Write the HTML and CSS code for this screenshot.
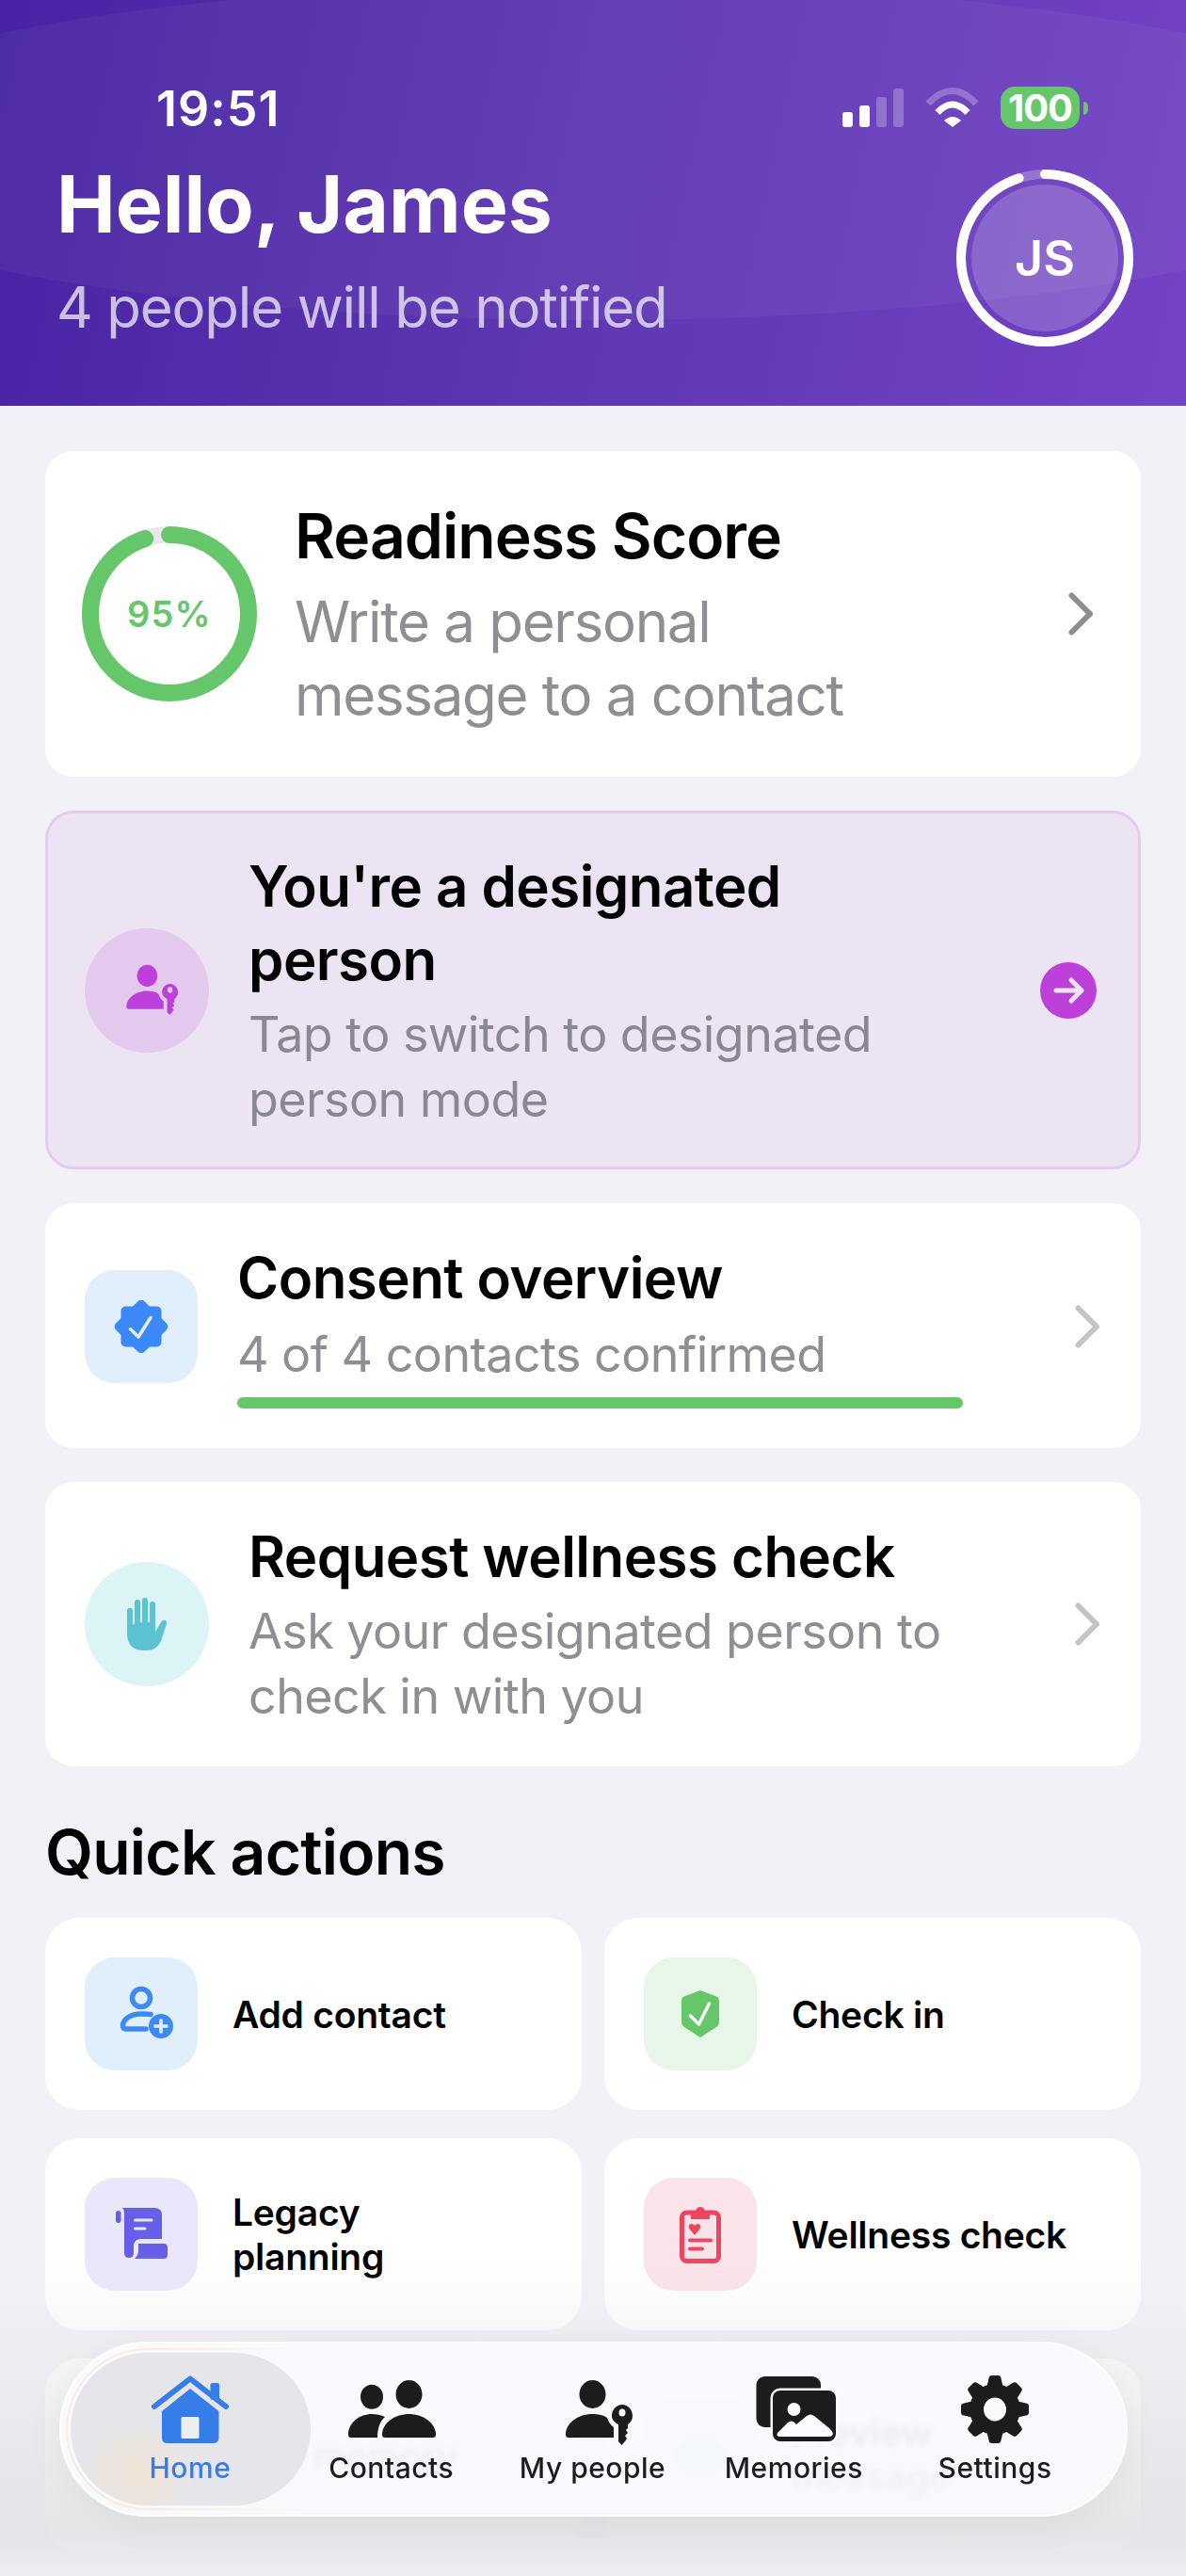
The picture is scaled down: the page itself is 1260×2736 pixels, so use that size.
FILE: index.html
```html
<!DOCTYPE html>
<html lang="en">
<head>
<meta charset="utf-8">
<title>Home</title>
<link rel="stylesheet" href="styles.css">
</head>
<body>
<svg class="defs" width="0" height="0" aria-hidden="true">
  <symbol id="person-key" viewBox="0 0 96 74">
    <ellipse cx="48.5" cy="20" rx="14" ry="15"/>
    <path d="M20 63C20 50 34 41 48 41C55 41 60 42 64 45C66 50 68 53 71 55V66H23Q20 66 20 63Z"/>
    <path fill-rule="evenodd" d="M80 31C86 31 91 36 91 43C91 47 89 50 86 52V56L84 58L86 61L83 64L85 67L83 70L79.500 74L76 70V52C72 50 69 47 69 43C69 36 74 31 80 31ZM80 35.500A3.500 4 0 1 0 80 43.500A3.500 4 0 1 0 80 35.500Z"/>
  </symbol>
  <symbol id="chev" viewBox="0 0 26 46">
    <path d="M3.500 3.500L23 23L3.500 42.500" fill="none" stroke="currentColor" stroke-width="6" stroke-linecap="round" stroke-linejoin="round"/>
  </symbol>
</svg>

<div class="phone">
  <header class="hero">
    <div class="hero-glow"></div>
    <div class="status">
      <span class="time">19:51</span>
      <div class="status-icons">
        <div class="signal"><i class="bar b1"></i><i class="bar b2"></i><i class="bar b3 dim"></i><i class="bar b4 dim"></i></div>
        <svg class="wifi" viewBox="0 0 57 42">
          <path class="wifi-dim" d="M3 17Q28.500 -10 54 17"/>
          <path class="wifi-on" d="M13 26.500Q29 9.500 45 26.500"/>
          <path class="wifi-fill" d="M29 42L20 35Q29 27 38 35Z"/>
        </svg>
        <div class="battery"><span class="battery-body">100</span><i class="battery-nub"></i></div>
      </div>
    </div>
    <div class="greeting">
      <div class="greeting-text">
        <h1>Hello, James</h1>
        <p>4 people will be notified</p>
      </div>
      <div class="avatar">
        <svg class="avatar-ring" viewBox="0 0 188 188">
          <circle class="ar-track" cx="94" cy="94" r="89"/>
          <circle class="ar-value" cx="94" cy="94" r="89" pathLength="100" stroke-dasharray="95 100" transform="rotate(-90 94 94)"/>
        </svg>
        <span class="avatar-initials">JS</span>
      </div>
    </div>
  </header>

  <main class="content">
    <section class="card card-score">
      <div class="score">
        <svg class="score-ring" viewBox="0 0 186 186">
          <circle class="sr-track" cx="93" cy="93" r="84"/>
          <circle class="sr-value" cx="93" cy="93" r="84" pathLength="100" stroke-dasharray="95 100" transform="rotate(-90 93 93)"/>
        </svg>
        <span class="score-label">95%</span>
      </div>
      <div class="score-text">
        <h2 class="t-big">Readiness Score</h2>
        <p class="s-big">Write a personal message to a contact</p>
      </div>
      <svg class="chev chev-dark"><use href="#chev"/></svg>
    </section>

    <section class="card card-designated">
      <div class="round round-purple">
        <svg class="person-key-sm"><use href="#person-key"/></svg>
      </div>
      <div class="round-text">
        <h2 class="t-mid">You're a designated person</h2>
        <p class="s-mid s-purple">Tap to switch to designated person mode</p>
      </div>
      <div class="go">
        <svg viewBox="0 0 60 60"><path d="M17 30H44M33 19L44 30L33 41"/></svg>
      </div>
    </section>

    <section class="card card-consent">
      <div class="icon-tile tile-blue">
        <svg class="badge" viewBox="0 0 60 60">
          <rect x="8.500" y="8.500" width="43" height="43" rx="5"/>
          <rect x="8.500" y="8.500" width="43" height="43" rx="5" transform="rotate(45 30 30)"/>
          <path d="M18.500 32.500L27 41L40 20.500"/>
        </svg>
      </div>
      <div class="consent-text">
        <h2 class="t-mid t-tight">Consent overview</h2>
        <p class="s-consent">4 of 4 contacts confirmed</p>
        <div class="progress"></div>
      </div>
      <svg class="chev chev-light"><use href="#chev"/></svg>
    </section>

    <section class="card card-wellness">
      <div class="round round-teal">
        <svg class="hand" viewBox="0 0 43 56"><path d="M0 14Q0 10.700 3 10.700Q6 10.700 6 14V28H8V5Q8 2 11 2Q14 2 14 5V26H16V3Q16 0 19 0Q22 0 22 3V26H24V7Q24 4 27 4Q30 4 30 7V36L36 26Q38 23 41 24Q42.500 25 42 28L36 46Q32 56 19 56Q0 56 0 38Z"/></svg>
      </div>
      <div class="round-text round-text-wide">
        <h2 class="t-mid">Request wellness check</h2>
        <p class="s-mid">Ask your designated person to check in with you</p>
      </div>
      <svg class="chev chev-light"><use href="#chev"/></svg>
    </section>

    <h2 class="section-title">Quick actions</h2>

    <div class="quick-grid">
      <div class="quick">
        <div class="icon-tile tile-blue">
          <svg class="qi-add" viewBox="0 0 100 100">
            <circle cx="50" cy="33" r="9.500"/>
            <path d="M60 50.500C57 50 54 50 50 50C38 50 31 56 30.500 62C30.500 65 32 66 34 66H55"/>
            <circle class="plus-bg" cx="71" cy="63" r="13"/>
            <path class="plus" d="M71 55.500V70.500M63.500 63H78.500"/>
          </svg>
        </div>
        <span class="quick-label">Add contact</span>
      </div>
      <div class="quick">
        <div class="icon-tile tile-green">
          <svg class="qi-shield" viewBox="0 0 42 50">
            <path class="shield" d="M21 0L37 6Q41 7 41 11V33Q41 37 38 39L21 50L4 39Q1 37 1 33V11Q1 7 5 6Z"/>
            <path class="shield-check" d="M10.500 27L19.500 36L30.500 14"/>
          </svg>
        </div>
        <span class="quick-label">Check in</span>
      </div>
      <div class="quick">
        <div class="icon-tile tile-indigo">
          <svg class="qi-scroll" viewBox="0 0 100 100">
            <rect x="23" y="25" width="5.500" height="13" rx="2.700"/>
            <path d="M30 22H64Q72 22 72 30V55H50Q42 55 42 63V70Q42 75 37 75Q32 75 32 70V28Q32 24 30 22Z"/>
            <path d="M47 60H74Q78 60 78 64V72Q78 76 74 76H43Q47 72 47 68Z"/>
            <path class="scroll-line" d="M43.500 35H61M43.500 44H54"/>
          </svg>
        </div>
        <span class="quick-label">Legacy<br>planning</span>
      </div>
      <div class="quick">
        <div class="icon-tile tile-rose">
          <svg class="qi-clip" viewBox="0 0 44 62">
            <rect class="clip-frame" x="2.500" y="8" width="39" height="51.500" rx="5"/>
            <path class="clip-top" d="M12 15V9Q12 7 14 7H17A5 5 0 0 1 27 7H30Q32 7 32 9V15Z"/>
            <path class="clip-heart" d="M16 32L10.500 25.500C9 23 10 20 12.500 20C14 20 15.500 21 16 22C16.500 21 18 20 19.500 20C22 20 23 23 21.500 25.500Z"/>
            <path class="clip-line" d="M11 37.500H33M11 46.500H24"/>
          </svg>
        </div>
        <span class="quick-label">Wellness check</span>
      </div>
      <div class="quick">
        <div class="icon-tile tile-orange"></div>
        <span class="quick-label">Add memory</span>
      </div>
      <div class="quick">
        <div class="icon-tile tile-teal">
          <svg class="qi-eye" viewBox="0 0 70 44">
            <path d="M0 22Q35 -22 70 22Q35 66 0 22Z"/>
          </svg>
        </div>
        <span class="quick-label">Preview<br>message</span>
      </div>
    </div>
  </main>

  <div class="fade"></div>

  <nav class="tabbar">
    <a class="tab tab-active">
      <svg class="tab-icon" viewBox="0 0 96 74">
        <path class="home-roof" d="M10 33L48 3.500L86 33"/>
        <rect x="69.500" y="8" width="9.500" height="18" rx="2"/>
        <path d="M48 14L78.500 38V66Q78.500 72 72 72H24Q18 72 18 66V38Z"/>
        <rect class="home-door" x="38.500" y="44" width="19" height="23" rx="1.500"/>
      </svg>
      <span class="tab-label">Home</span>
    </a>
    <a class="tab">
      <svg class="tab-icon" viewBox="0 0 96 74">
        <ellipse cx="27" cy="22.700" rx="12" ry="13"/>
        <ellipse cx="66.500" cy="20" rx="14" ry="15"/>
        <path d="M2 63C2 50 14 41 27 41C32 41 37 42 41 44C36 48 33 56 33 66H5Q2 66 2 63Z"/>
        <path d="M38 63C38 50 52 41 66.500 41C81 41 95 50 95 63Q95 66 92 66H41Q38 66 38 63Z"/>
      </svg>
      <span class="tab-label">Contacts</span>
    </a>
    <a class="tab">
      <svg class="tab-icon"><use href="#person-key"/></svg>
      <span class="tab-label">My people</span>
    </a>
    <a class="tab">
      <svg class="tab-icon" viewBox="0 0 96 74">
        <rect x="8.500" y="1" width="68.500" height="54" rx="9"/>
        <rect class="photo-front" x="26" y="16" width="67" height="54" rx="8"/>
        <circle class="photo-cut" cx="48.500" cy="36" r="7"/>
        <path class="photo-cut" d="M34 65Q29 65 31 61L42 50Q46 47 49 50L51 52L62 43Q66 40 70 43L86 56Q90 60 90 62Q89 65 86 65Z"/>
      </svg>
      <span class="tab-label">Memories</span>
    </a>
    <a class="tab">
      <svg class="tab-icon" viewBox="0 0 96 74">
        <g id="gear-teeth">
          <path id="tooth" d="M41.500 3Q42 0 44.500 0H51.500Q54 0 54.500 3L57 14H39Z"/>
          <use href="#tooth" transform="rotate(45 48 36)"/>
          <use href="#tooth" transform="rotate(90 48 36)"/>
          <use href="#tooth" transform="rotate(135 48 36)"/>
          <use href="#tooth" transform="rotate(180 48 36)"/>
          <use href="#tooth" transform="rotate(225 48 36)"/>
          <use href="#tooth" transform="rotate(270 48 36)"/>
          <use href="#tooth" transform="rotate(315 48 36)"/>
        </g>
        <path fill-rule="evenodd" d="M48 9A27 27 0 1 1 48 63A27 27 0 1 1 48 9ZM48 23.500A12 12.500 0 1 0 48 48.500A12 12.500 0 1 0 48 23.500Z"/>
      </svg>
      <span class="tab-label">Settings</span>
    </a>
  </nav>
</div>
</body>
</html>
```

FILE: styles.css
```css
* { box-sizing: border-box; }

html, body {
  margin: 0;
  padding: 0;
}

body {
  font-family: Inter, "Liberation Sans", sans-serif;
  background: #f2f1f7;
  color: #000;
}

h1, h2, p { margin: 0; }

.defs { position: absolute; }

.phone {
  position: relative;
  width: 1260px;
  height: 2736px;
  overflow: hidden;
  background: #f2f1f7;
}

/* Header */
.hero {
  position: relative;
  height: 431px;
  overflow: hidden;
  color: #fff;
  background: linear-gradient(102deg, #4722a3 0%, #5c35b0 45%, #7343c6 100%);
}

.hero-glow {
  position: absolute;
  left: -256px;
  top: -18px;
  width: 1772px;
  height: 358px;
  border-radius: 50%;
  background: rgba(255, 255, 255, 0.045);
}

.status {
  position: relative;
  display: flex;
  justify-content: space-between;
  align-items: flex-start;
  height: 146px;
  padding: 86px 104px 0 166px;
}

.time {
  font-size: 52px;
  line-height: 60px;
  font-weight: 600;
  letter-spacing: 1px;
}

.status-icons {
  display: flex;
  align-items: flex-start;
  margin-top: 6px;
}

.signal {
  display: flex;
  align-items: flex-end;
  gap: 7px;
  width: 65px;
  height: 43px;
}

.bar {
  width: 11px;
  border-radius: 3px;
  background: #fff;
}
.b1 { height: 16px; }
.b2 { height: 23px; }
.b3 { height: 32px; }
.b4 { height: 41px; }
.dim { background: rgba(255, 255, 255, 0.25); }

.wifi {
  width: 57px;
  height: 42px;
  margin: 1px 23px 0 23px;
  fill: none;
  stroke-width: 7;
}
.wifi-dim { stroke: rgba(255, 255, 255, 0.25); }
.wifi-on { stroke: #fff; }
.wifi-fill { fill: #fff; }

.battery {
  display: flex;
  align-items: center;
  gap: 4px;
}

.battery-body {
  width: 84px;
  height: 45px;
  border-radius: 15px;
  background: #66c66a;
  font-size: 40px;
  line-height: 45px;
  font-weight: 700;
  letter-spacing: -1px;
  text-align: center;
}

.battery-nub {
  width: 5px;
  height: 14px;
  border-radius: 0 5px 5px 0;
  background: #66c66a;
}

.greeting {
  position: relative;
  display: flex;
  justify-content: space-between;
  align-items: flex-start;
  padding: 21px 56px 0 60px;
}

.greeting h1 {
  font-size: 84px;
  line-height: 100px;
  font-weight: 700;
  letter-spacing: 0;
}

.greeting p {
  margin-top: 23px;
  font-size: 60px;
  line-height: 72px;
  font-weight: 400;
  color: rgba(255, 255, 255, 0.7);
  letter-spacing: -1.2px;
}

.avatar {
  display: grid;
  place-items: center;
  width: 188px;
  height: 188px;
  margin-top: 13px;
}
.avatar > * { grid-area: 1 / 1; }

.avatar-ring { width: 188px; height: 188px; }
.ar-track { fill: none; stroke: rgba(255, 255, 255, 0.25); stroke-width: 10; }
.ar-value { fill: none; stroke: #fff; stroke-width: 10; stroke-linecap: round; }

.avatar-initials {
  display: flex;
  align-items: center;
  justify-content: center;
  width: 156px;
  height: 156px;
  border-radius: 50%;
  background: rgba(255, 255, 255, 0.18);
  font-size: 52px;
  font-weight: 600;
}

/* Content */
.content {
  padding: 48px 48px 0;
}

.card {
  display: flex;
  align-items: center;
  margin-bottom: 36px;
  border-radius: 30px;
  background: #fff;
}

.card-score { padding: 51px 51px 48px 39px; }

.score {
  display: grid;
  place-items: center;
  flex: none;
  width: 186px;
  height: 186px;
  margin: 0 40px 3px 0;
}
.score > * { grid-area: 1 / 1; }
.score-ring { width: 186px; height: 186px; }
.sr-track { fill: none; stroke: #e8e8ea; stroke-width: 18; }
.sr-value { fill: none; stroke: #66c66a; stroke-width: 18; stroke-linecap: round; }

.score-label {
  font-size: 38px;
  font-weight: 600;
  color: #66c66a;
  letter-spacing: 1.2px;
}

.score-text { max-width: 640px; }

.t-big {
  font-size: 66px;
  line-height: 78px;
  font-weight: 600;
  letter-spacing: -1px;
}

.s-big {
  margin-top: 13px;
  font-size: 60px;
  line-height: 78px;
  font-weight: 400;
  color: #8e8e93;
  letter-spacing: -1.3px;
}

.chev {
  flex: none;
  width: 26px;
  height: 46px;
  margin-left: auto;
}
.chev-dark { color: #8e8e93; margin-bottom: 3px; }
.chev-light { color: #c4c4c7; }

.card-designated {
  padding: 38px 44px 37px 39px;
  border: 3px solid #e3cdef;
  background: #ede4f3;
}

.round {
  display: flex;
  align-items: center;
  justify-content: center;
  flex: none;
  width: 132px;
  height: 132px;
  margin-right: 42px;
  border-radius: 50%;
}
.round-purple { background: #e3c9ee; }
.round-teal { background: #dcf4f6; }

.person-key-sm {
  width: 74px;
  height: 57px;
  margin-bottom: 5px;
  fill: #bc40d9;
}

.round-text { max-width: 720px; }
.round-text-wide { max-width: 770px; }

.t-mid {
  font-size: 60px;
  line-height: 78px;
  font-weight: 600;
  letter-spacing: -0.55px;
}

.s-mid {
  margin-top: 6px;
  font-size: 52px;
  line-height: 69px;
  font-weight: 400;
  color: #8e8e93;
  letter-spacing: -0.55px;
}
.s-purple { color: #8a8792; }

.go {
  flex: none;
  width: 60px;
  height: 60px;
  margin-left: auto;
  border-radius: 50%;
  background: #bc40d9;
}
.go svg {
  display: block;
  width: 60px;
  height: 60px;
  fill: none;
  stroke: #f3e3f7;
  stroke-width: 5;
  stroke-linecap: round;
  stroke-linejoin: round;
}

.card-consent { padding: 43px 44px 42px 42px; }

.icon-tile {
  display: flex;
  align-items: center;
  justify-content: center;
  flex: none;
  width: 120px;
  height: 120px;
  border-radius: 32px;
}
.tile-blue { background: #e1effd; }
.tile-green { background: #e8f6ea; }
.tile-indigo { background: #e9e7fb; }
.tile-rose { background: #fae3e9; }
.tile-orange { background: #fdeedd; }
.tile-teal { background: #dcf7f9; }

.badge { width: 60px; height: 60px; fill: #3b88f8; }
.badge path {
  fill: none;
  stroke: #e6f0fd;
  stroke-width: 3.5;
  stroke-linecap: round;
  stroke-linejoin: round;
}

.consent-text {
  width: 771px;
  margin-left: 42px;
}

.t-tight { line-height: 72px; }

.s-consent {
  margin-top: 13px;
  font-size: 52px;
  line-height: 66px;
  font-weight: 400;
  color: #8e8e93;
  letter-spacing: -0.55px;
}

.progress {
  height: 12px;
  margin-top: 12px;
  border-radius: 6px;
  background: #66c66a;
}

.card-wellness { padding: 40px 44px 40px 42px; }

.hand { width: 43px; height: 56px; fill: #5bc3d1; }

.section-title {
  margin: 51px 0 30px;
  font-size: 66px;
  line-height: 80px;
  font-weight: 600;
  letter-spacing: -0.8px;
}

.quick-grid {
  display: grid;
  grid-template-columns: 570px 570px;
  grid-auto-rows: 204px;
  column-gap: 24px;
  row-gap: 30px;
}

.quick {
  display: flex;
  align-items: center;
  padding-left: 42px;
  border-radius: 36px;
  background: #fff;
}

.quick-label {
  margin-left: 37px;
  font-size: 39px;
  line-height: 47px;
  font-weight: 600;
  letter-spacing: -0.25px;
}

.qi-add { width: 100px; height: 100px; fill: none; stroke: #3d8af7; stroke-width: 5.5; stroke-linecap: round; }
.plus-bg { fill: #3d8af7; stroke: none; }
.plus { stroke: #e1effd; stroke-width: 3.5; stroke-linecap: butt; }

.qi-shield { width: 42px; height: 50px; }
.shield { fill: #66c66a; }
.shield-check { fill: none; stroke: #fff; stroke-width: 3.5; stroke-linecap: round; stroke-linejoin: round; }

.qi-scroll { width: 100px; height: 100px; fill: #675fe8; }
.scroll-line { fill: none; stroke: #e9e7fb; stroke-width: 3; stroke-linecap: round; }

.qi-clip { width: 44px; height: 62px; }
.clip-frame { fill: none; stroke: #ec4560; stroke-width: 5; }
.clip-top { fill: #ec4560; }
.clip-heart { fill: #ec4560; }
.clip-line { fill: none; stroke: #ec4560; stroke-width: 4; stroke-linecap: round; }

.qi-eye { width: 70px; height: 44px; fill: #7fe9ef; }

/* Bottom fade under the floating tab bar */
.fade {
  position: absolute;
  left: 0;
  right: 0;
  bottom: 0;
  height: 340px;
  background: linear-gradient(180deg,
    rgba(228, 228, 232, 0) 0%,
    rgba(228, 228, 232, 0.28) 24%,
    rgba(226, 226, 230, 0.88) 86%,
    rgba(238, 238, 242, 0.96) 100%);
}

.tabbar {
  position: absolute;
  left: 63px;
  right: 62px;
  bottom: 63px;
  display: flex;
  height: 186px;
  padding: 36px 34px 0 32px;
  border-radius: 93px;
  background: rgba(251, 251, 255, 0.88);
  backdrop-filter: blur(3px);
  box-shadow: 0 8px 40px rgba(0, 0, 0, 0.05), inset 0 0 0 2px rgba(255, 255, 255, 0.9);
}

.tabbar::after {
  content: "";
  position: absolute;
  inset: 7px;
  border: 2px solid rgba(250, 224, 190, 0.55);
  border-radius: 86px;
  -webkit-mask-image: linear-gradient(90deg, #000 8%, transparent 22%);
  mask-image: linear-gradient(90deg, #000 8%, transparent 22%);
}

.tab {
  position: relative;
  display: flex;
  flex: 1;
  flex-direction: column;
  align-items: center;
  color: #1c1c1e;
  fill: #1c1c1e;
}

.tab-active {
  color: #377de9;
  fill: #377de9;
}

.tab-active::before {
  content: "";
  position: absolute;
  left: -20px;
  top: -24px;
  width: 255px;
  height: 162px;
  border-radius: 81px;
  background:
    radial-gradient(ellipse 60px 55px at 28% 78%, rgba(250, 226, 200, 0.6), rgba(250, 226, 200, 0)),
    #e6e6ea;
}

.tab-icon {
  position: relative;
  display: block;
  width: 96px;
  height: 74px;
}

.home-roof {
  fill: none;
  stroke: #377de9;
  stroke-width: 6;
  stroke-linecap: round;
  stroke-linejoin: round;
}
.home-door { fill: #eeeef1; }

.photo-front { stroke: #fbfbff; stroke-width: 5; paint-order: stroke; }
.photo-cut { fill: #fbfbff; }

.tab-label {
  position: relative;
  margin-top: 6px;
  font-size: 30px;
  line-height: 36px;
  font-weight: 500;
  letter-spacing: 0.5px;
}
```
